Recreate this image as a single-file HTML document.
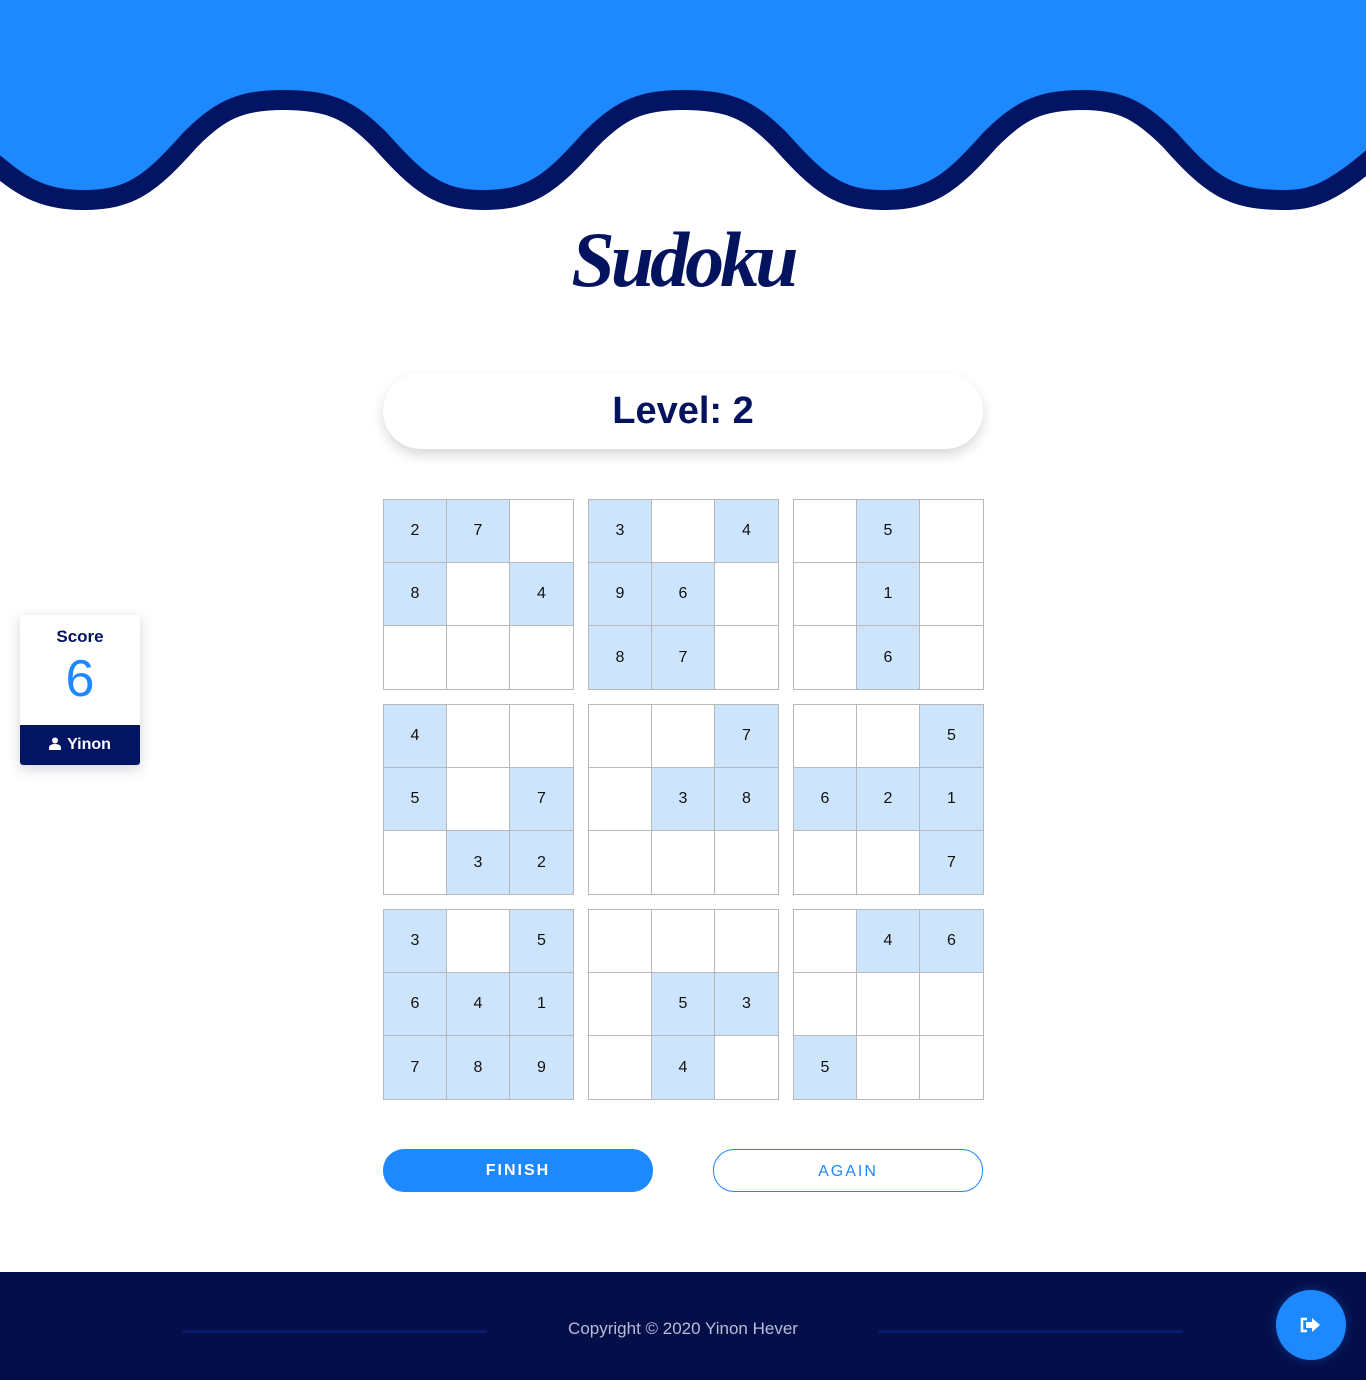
<!DOCTYPE html>
<html><head><meta charset="utf-8"><style>
body{margin:0;width:1366px;height:1380px;position:relative;background:#fff;font-family:"Liberation Sans",sans-serif;overflow:hidden}
.title{position:absolute;left:0;width:1366px;top:215px;text-align:center;font:italic bold 78px "Liberation Serif",serif;color:#04135e;letter-spacing:-4px}
.level{position:absolute;left:383px;top:373px;width:600px;height:76px;border-radius:38px;background:#fff;box-shadow:0 6px 12px rgba(0,0,0,.15);text-align:center;line-height:76px;font-weight:bold;font-size:38px;color:#04135e}
.box{position:absolute;width:189px;height:189px;border:1px solid #b8b8b8;display:grid;grid-template-columns:62px 62px 63px;grid-template-rows:62px 62px 63px;gap:1px;background:#b8b8b8}
.box div{background:#fff;display:flex;align-items:center;justify-content:center;font-size:16px;color:#111}
.box div.f{background:#cce5fc}
.btn{position:absolute;top:1149px;width:270px;height:43px;border-radius:21px;box-sizing:border-box;text-align:center;line-height:43px;font-size:16px;font-weight:bold;letter-spacing:2px}
.score{position:absolute;left:20px;top:615px;width:120px;height:150px;background:#fff;border-radius:3px;box-shadow:0 4px 14px rgba(0,0,50,.18);overflow:hidden}
footer{position:absolute;left:0;top:1272px;width:1366px;height:108px;background:#040f4a}
</style></head><body>
<svg style="position:absolute;left:0;top:0" width="1366" height="215">
<path d="M-10,0 H1376 V155 C1330,195 1310,200 1283,200 C1230,200 1210,185 1170,140 C1140,110 1120,100 1083,100 C1040,100 1020,110 990,140 C950,185 930,200 883,200 C840,200 820,185 780,140 C750,110 730,100 683,100 C640,100 620,110 590,140 C550,185 530,200 483,200 C440,200 420,185 380,140 C350,110 330,100 283,100 C240,100 220,110 190,140 C150,185 130,200 83,200 C40,200 20,185 -10,160 Z" fill="#1e88ff"/>
<path d="M-10,160 C20,185 40,200 83,200 C130,200 150,185 190,140 C220,110 240,100 283,100 C330,100 350,110 380,140 C420,185 440,200 483,200 C530,200 550,185 590,140 C620,110 640,100 683,100 C730,100 750,110 780,140 C820,185 840,200 883,200 C930,200 950,185 990,140 C1020,110 1040,100 1083,100 C1120,100 1140,110 1170,140 C1210,185 1230,200 1283,200 C1310,200 1330,195 1376,155" fill="none" stroke="#021462" stroke-width="20"/>
</svg>
<div class="title">Sudoku</div>
<div class="level">Level: 2</div>

<div class="box" style="left:383px;top:499px"><div class="f">2</div><div class="f">7</div><div></div><div class="f">8</div><div></div><div class="f">4</div><div></div><div></div><div></div></div>
<div class="box" style="left:588px;top:499px"><div class="f">3</div><div></div><div class="f">4</div><div class="f">9</div><div class="f">6</div><div></div><div class="f">8</div><div class="f">7</div><div></div></div>
<div class="box" style="left:793px;top:499px"><div></div><div class="f">5</div><div></div><div></div><div class="f">1</div><div></div><div></div><div class="f">6</div><div></div></div>

<div class="box" style="left:383px;top:704px"><div class="f">4</div><div></div><div></div><div class="f">5</div><div></div><div class="f">7</div><div></div><div class="f">3</div><div class="f">2</div></div>
<div class="box" style="left:588px;top:704px"><div></div><div></div><div class="f">7</div><div></div><div class="f">3</div><div class="f">8</div><div></div><div></div><div></div></div>
<div class="box" style="left:793px;top:704px"><div></div><div></div><div class="f">5</div><div class="f">6</div><div class="f">2</div><div class="f">1</div><div></div><div></div><div class="f">7</div></div>

<div class="box" style="left:383px;top:909px"><div class="f">3</div><div></div><div class="f">5</div><div class="f">6</div><div class="f">4</div><div class="f">1</div><div class="f">7</div><div class="f">8</div><div class="f">9</div></div>
<div class="box" style="left:588px;top:909px"><div></div><div></div><div></div><div></div><div class="f">5</div><div class="f">3</div><div></div><div class="f">4</div><div></div></div>
<div class="box" style="left:793px;top:909px"><div></div><div class="f">4</div><div class="f">6</div><div></div><div></div><div></div><div class="f">5</div><div></div><div></div></div>

<div class="btn" style="left:383px;background:#1e88ff;color:#fff">FINISH</div>
<div class="btn" style="left:713px;border:1px solid #1e88ff;color:#1e88ff;font-weight:normal">AGAIN</div>

<div class="score">
<div style="text-align:center;margin-top:12px;font-size:17px;font-weight:bold;color:#04135e">Score</div>
<div style="text-align:center;font-size:52px;line-height:52px;margin-top:6px;color:#1e88ff;font-weight:300">6</div>
<div style="position:absolute;left:0;bottom:0;width:120px;height:40px;background:#021462;color:#fff;font-size:16px;font-weight:bold;line-height:40px;text-align:center"><svg width="12" height="13" viewBox="0 0 12 13" style="vertical-align:-1px;margin-right:6px"><circle cx="6" cy="3.5" r="3" fill="#fff"/><path d="M0,13 V11 C0,8 3,7 6,7 C9,7 12,8 12,11 V13Z" fill="#fff"/></svg>Yinon</div>
</div>

<footer>
<div style="position:absolute;left:183px;top:58px;width:304px;height:3px;background:#0a1c6e"></div>
<div style="position:absolute;left:879px;top:58px;width:304px;height:3px;background:#0a1c6e"></div>
<div style="position:absolute;left:0;width:1366px;top:47px;text-align:center;color:#b8bcd6;font-size:17px">Copyright © 2020 Yinon Hever</div>
<div style="position:absolute;left:1276px;top:18px;width:70px;height:70px;border-radius:50%;background:#1e88ff;box-shadow:0 0 10px rgba(30,136,255,.3)">
<svg width="22" height="16" viewBox="0 0 22 16" style="position:absolute;left:24px;top:27px"><path d="M7,2 H2 V14 H7" fill="none" stroke="#fff" stroke-width="2.5"/><path d="M6,5 H12 V1 L20,8 L12,15 V11 H6Z" fill="#fff"/></svg>
</div>
</footer>
</body></html>
